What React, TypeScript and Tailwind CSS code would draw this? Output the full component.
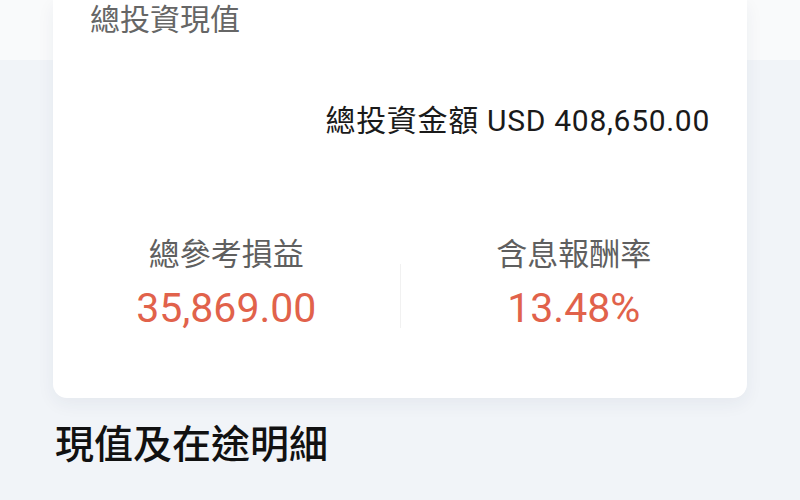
export default function App() {
  return (
    <div
      className="w-[800px] h-[500px] overflow-hidden bg-[linear-gradient(to_bottom,#f9fafb_0px,#f9fafb_60px,#f1f4f8_60px)]"
      style={{ fontFamily: "Roboto, 'Noto Sans CJK TC', sans-serif" }}
    >
      <div className="mx-[53px] bg-white rounded-b-[14px] shadow-[0_6px_18px_rgba(30,50,80,0.06)] pb-[66px]">
        <div className="pl-[37px] text-[30px] leading-[40px] text-[#666]">總投資現值</div>
        <div className="mt-[61px] pr-[37px] text-right text-[30px] leading-[40px] text-[#1a1a1a] tracking-[0.7px]">
          總投資金額 USD 408,650.00
        </div>
        <div className="mt-[94px] flex items-start">
          <div className="flex-1 flex flex-col items-center gap-[9px]">
            <div className="text-[31px] leading-[40px] text-[#5f5f5f]">總參考損益</div>
            <div className="text-[41px] leading-[48px] text-[#e1624b]">35,869.00</div>
          </div>
          <div className="w-px h-[64px] mt-[29px] bg-[#f1f1f1]" />
          <div className="flex-1 flex flex-col items-center gap-[9px]">
            <div className="text-[31px] leading-[40px] text-[#5f5f5f]">含息報酬率</div>
            <div className="text-[41px] leading-[48px] text-[#e1624b]">13.48%</div>
          </div>
        </div>
      </div>
      <div className="mt-[23px] pl-[55px] text-[39px] leading-[48px] font-medium text-[#111]">現值及在途明細</div>
    </div>
  );
}
